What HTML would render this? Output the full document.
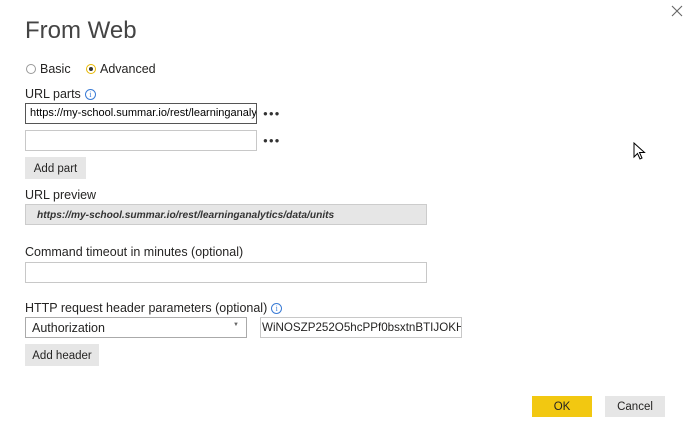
<!DOCTYPE html>
<html><head><style>
body{margin:0;width:692px;height:431px;background:#fff;position:relative;overflow:hidden;font-family:"Liberation Sans",sans-serif;color:#252423;font-size:12px}
.a{position:absolute;white-space:nowrap}
.box{position:absolute;box-sizing:border-box;border:1px solid #c8c8c8;background:#fff}
.btn{position:absolute;background:#e6e6e6;font-size:11.5px;text-align:center;box-sizing:border-box;padding-top:2px}
.lbl{position:absolute;font-size:12.5px;color:#252423;white-space:nowrap}
.info{display:inline-block;width:9px;height:9px;border:1px solid #3a7bd5;border-radius:50%;font-size:8px;line-height:9px;text-align:center;color:#3a7bd5;vertical-align:1px;margin-left:4px;font-family:"Liberation Serif",serif}
.dots{position:absolute;font-size:8px;letter-spacing:1px;color:#333}
</style></head><body>
<div class="a" style="left:25px;top:17px;font-size:24px;color:#444;letter-spacing:0px">From Web</div>
<svg class="a" style="left:671px;top:5px" width="12" height="12"><path d="M1 1L11 11M11 1L1 11" stroke="#666" stroke-width="1.1"/></svg>
<div class="a" style="left:26px;top:64px;width:8px;height:8px;border:1px solid #999;border-radius:50%"></div>
<div class="lbl" style="left:40px;top:62px">Basic</div>
<div class="a" style="left:86px;top:64px;width:8px;height:8px;border:1px solid #e8b800;border-radius:50%"></div>
<div class="a" style="left:89px;top:67px;width:4px;height:4px;background:#333;border-radius:50%"></div>
<div class="lbl" style="left:100px;top:62px">Advanced</div>
<div class="lbl" style="left:25px;top:87px">URL parts<span class="info">i</span></div>
<div class="box" style="left:25px;top:103px;width:232px;height:21px;border-color:#555;overflow:hidden"><div class="a" style="left:4px;top:3px;font-size:11px;color:#000">https://my-school.summar.io/rest/learninganalytics</div></div>
<div class="dots" style="left:263px;top:109px">●●●</div>
<div class="box" style="left:25px;top:130px;width:232px;height:21px"></div>
<div class="dots" style="left:263px;top:136px">●●●</div>
<div class="btn" style="left:25px;top:157px;width:61px;height:22px;line-height:20px">Add part</div>
<div class="lbl" style="left:25px;top:188px">URL preview</div>
<div class="box" style="left:25px;top:204px;width:402px;height:21px;background:#e6e6e6;border-color:#ccc"><div class="a" style="left:11px;top:5px;font-size:10.2px;font-style:italic;font-weight:bold;color:#333">https://my-school.summar.io/rest/learninganalytics/data/units</div></div>
<div class="lbl" style="left:25px;top:245px">Command timeout in minutes (optional)</div>
<div class="box" style="left:25px;top:262px;width:402px;height:21px"></div>
<div class="lbl" style="left:25px;top:301px">HTTP request header parameters (optional)<span class="info">i</span></div>
<div class="box" style="left:25px;top:317px;width:222px;height:21px;border-color:#aaa"><div class="a" style="left:6px;top:3px;font-size:12.5px">Authorization</div><div class="a" style="left:207px;top:4px;font-size:6px;color:#666">▼</div></div>
<div class="box" style="left:260px;top:317px;width:202px;height:21px;overflow:hidden"><div class="a" style="left:1px;top:3px;font-size:11.6px">WiNOSZP252O5hcPPf0bsxtnBTIJOKHI</div></div>
<div class="btn" style="left:25px;top:344px;width:74px;height:22px;line-height:20px">Add header</div>
<div class="btn" style="left:532px;top:396px;width:60px;height:21px;line-height:19px;background:#f2c811">OK</div>
<div class="btn" style="left:605px;top:396px;width:60px;height:21px;line-height:19px">Cancel</div>
<svg class="a" style="left:633px;top:142px" width="13" height="20"><path d="M1 1L1 15L4.5 11.5L7 17L9 16L6.5 10.5L11.5 10.5Z" fill="#fff" stroke="#000" stroke-width="1"/></svg>
</body></html>
